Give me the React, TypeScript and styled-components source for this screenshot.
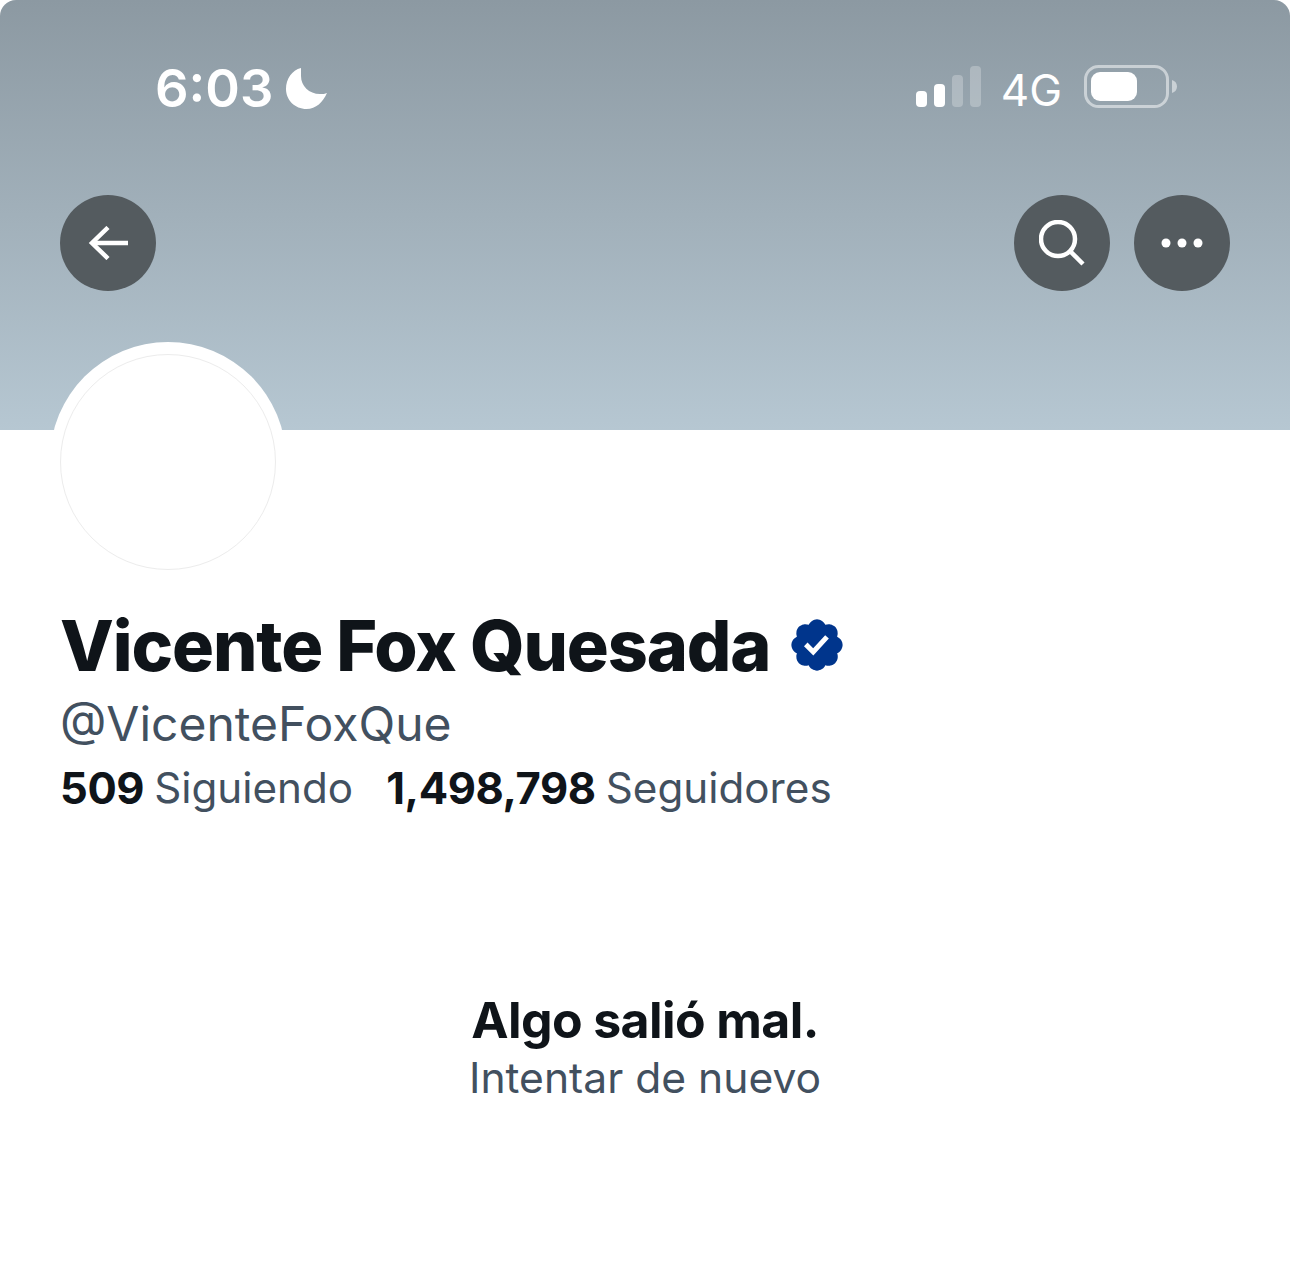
import React from "react";
import styled, { createGlobalStyle } from "styled-components";

const Global = createGlobalStyle`
  html, body { margin: 0; padding: 0; background: #fff; }
  body { font-family: "Inter", "Liberation Sans", sans-serif; }
`;
const Page = styled.div`
  width: 1290px; height: 1279px; background: #fff; overflow: hidden;
  display: flex; flex-direction: column;
`;
const Banner = styled.header`
  height: 430px; box-sizing: border-box;
  border-radius: 16px 16px 0 0;
  background: linear-gradient(180deg, #8c99a2 0%, #b6c7d2 100%);
  padding: 60px 60px 0;
  display: flex; flex-direction: column;
`;
const StatusBar = styled.div`
  height: 56px; display: flex; align-items: center; justify-content: space-between;
  padding: 0 53px 0 95px; color: #fff;
`;
const Clock = styled.div`
  display: flex; align-items: center; gap: 13px;
  font-size: 52.5px; font-weight: 600; letter-spacing: 0;
`;
const StatusRight = styled.div`
  display: flex; align-items: center; gap: 22px; margin-top: -3px;
`;
const SignalIcon = styled.svg`margin-right: -2px;`;
const Network = styled.span`
  font-size: 44px; font-weight: 400; color: #fff; line-height: 44px; padding-top: 7px;
`;
const Nav = styled.nav`
  margin-top: 79px; display: flex; justify-content: space-between;
`;
const NavGroup = styled.div`display: flex; gap: 24px;`;
const RoundButton = styled.button`
  width: 96px; height: 96px; border-radius: 50%; border: 0; padding: 0;
  background: #545b5f; display: flex; align-items: center; justify-content: center;
`;
const Profile = styled.section`
  padding: 0 50px; display: flex; flex-direction: column; align-items: flex-start;
`;
const AvatarRing = styled.div`
  margin-top: -88px; width: 236px; height: 236px; box-sizing: border-box;
  border-radius: 50%; background: #fff; padding: 12px 10px 8px 10px;
`;
const AvatarInner = styled.div`
  width: 216px; height: 216px; box-sizing: border-box; border-radius: 50%;
  border: 1px solid #ececec; background: #fff;
`;
const Info = styled.div`padding-left: 10px;`;
const NameRow = styled.div`
  margin-top: 24px; height: 86px; display: flex; align-items: center; gap: 17px;
`;
const Name = styled.h1`
  margin: 0; font-size: 70px; font-weight: 800; letter-spacing: -1.13px; color: #0f1419;
`;
const Handle = styled.div`
  margin-top: 6px; height: 60px; line-height: 60px; font-size: 48px; font-weight: 400;
  color: #42505f;
`;
const Stats = styled.div`
  margin-top: 6px; height: 56px; line-height: 56px; display: flex; gap: 33px; font-size: 42.2px;
`;
const Stat = styled.span`color: #42505f; display: flex; gap: 10px;`;
const Count = styled.b`color: #0f1419; font-weight: 700; font-size: 43.5px; letter-spacing: -.4px;`;
const ErrorBlock = styled.section`
  margin-top: 174px; display: flex; flex-direction: column; align-items: center;
`;
const ErrorTitle = styled.div`
  font-size: 50px; font-weight: 700; line-height: 60px; color: #0f1419; letter-spacing: -.6px;
`;
const Retry = styled.div`
  font-size: 42.6px; line-height: 56px; color: #42505f;
`;

export default function App() {
  return (
    <Page>
      <Global />
      <Banner>
        <StatusBar>
          <Clock>
            6:03
            <svg width="41" height="41" viewBox="0 0 41 41">
              <path fill="#fff" d="M15 0C6 2 0 11 0 21c0 11 9 20 20.500 20C30 41 37 34 41 25c-2 1-4 1-7 1-11 0-19-8-19-18 0-3 0-5 0-8z" />
            </svg>
          </Clock>
          <StatusRight>
            <SignalIcon width="65" height="41" viewBox="0 0 65 41">
              <rect x="0" y="25" width="11" height="16" rx="4" fill="#fff" />
              <rect x="18" y="18" width="11" height="23" rx="4" fill="#fff" />
              <rect x="36" y="9" width="11" height="32" rx="4" fill="#fff" fillOpacity=".25" />
              <rect x="54" y="0" width="11" height="41" rx="4" fill="#fff" fillOpacity=".25" />
            </SignalIcon>
            <Network>4G</Network>
            <svg width="93" height="43" viewBox="0 0 93 43">
              <rect x="1.500" y="1.500" width="82" height="40" rx="13" fill="none" stroke="#fff" strokeOpacity=".5" strokeWidth="3" />
              <rect x="7" y="7" width="46" height="29" rx="9" fill="#fff" />
              <path d="M88 15c3 1 5 3 5 6.500s-2 5.500-5 6.500z" fill="#fff" fillOpacity=".5" />
            </svg>
          </StatusRight>
        </StatusBar>
        <Nav>
          <RoundButton aria-label="Atrás">
            <svg width="40" height="34" viewBox="0 0 40 34" fill="none" stroke="#fff" strokeWidth="4.500">
              <path d="M40 17H4" />
              <path d="M20 1.500 4 17l16 15.500" />
            </svg>
          </RoundButton>
          <NavGroup>
            <RoundButton aria-label="Buscar">
              <svg width="46" height="46" viewBox="0 0 46 46" fill="none" stroke="#fff" strokeWidth="4.500">
                <circle cx="19" cy="19" r="17" />
                <path d="m31 31 13 13" />
              </svg>
            </RoundButton>
            <RoundButton aria-label="Más">
              <svg width="42" height="10" viewBox="0 0 42 10" fill="#fff">
                <circle cx="5" cy="5" r="4.500" />
                <circle cx="21" cy="5" r="4.500" />
                <circle cx="37" cy="5" r="4.500" />
              </svg>
            </RoundButton>
          </NavGroup>
        </Nav>
      </Banner>
      <Profile>
        <AvatarRing><AvatarInner /></AvatarRing>
        <Info>
          <NameRow>
            <Name>Vicente Fox Quesada</Name>
            <svg width="60" height="60" viewBox="0 0 22 22">
              <path fill="#00358c" d="M20.396 11c-.018-.646-.215-1.275-.57-1.816-.354-.54-.852-.972-1.438-1.246.223-.607.27-1.264.14-1.897-.131-.634-.437-1.218-.882-1.687-.47-.445-1.053-.75-1.687-.882-.633-.13-1.29-.083-1.897.14-.273-.587-.704-1.086-1.245-1.44S11.647 1.620 11 1.604c-.646.017-1.273.213-1.813.568s-.969.854-1.240 1.440c-.608-.223-1.267-.272-1.902-.14-.635.13-1.220.436-1.690.882-.445.47-.749 1.055-.878 1.688-.13.633-.08 1.290.144 1.896-.587.274-1.087.705-1.443 1.245-.356.54-.555 1.170-.574 1.817.02.647.218 1.276.574 1.817.356.54.856.972 1.443 1.245-.224.606-.274 1.263-.144 1.896.13.634.433 1.218.877 1.688.47.443 1.054.747 1.687.878.633.132 1.290.084 1.897-.136.274.586.705 1.084 1.246 1.439.54.354 1.170.551 1.816.569.647-.016 1.276-.213 1.817-.567s.972-.854 1.245-1.440c.604.239 1.266.296 1.903.164.636-.132 1.220-.447 1.680-.907.46-.46.776-1.044.908-1.681s.075-1.299-.165-1.903c.586-.274 1.084-.705 1.439-1.246.354-.54.551-1.170.569-1.816z" />
              <path fill="#fff" d="M9.662 14.850l-3.429-3.428 1.293-1.302 2.072 2.072 4.400-4.794 1.347 1.246z" />
            </svg>
          </NameRow>
          <Handle>@VicenteFoxQue</Handle>
          <Stats>
            <Stat><Count>509</Count> Siguiendo</Stat>
            <Stat><Count>1,498,798</Count> Seguidores</Stat>
          </Stats>
        </Info>
      </Profile>
      <ErrorBlock>
        <ErrorTitle>Algo salió mal.</ErrorTitle>
        <Retry>Intentar de nuevo</Retry>
      </ErrorBlock>
    </Page>
  );
}
